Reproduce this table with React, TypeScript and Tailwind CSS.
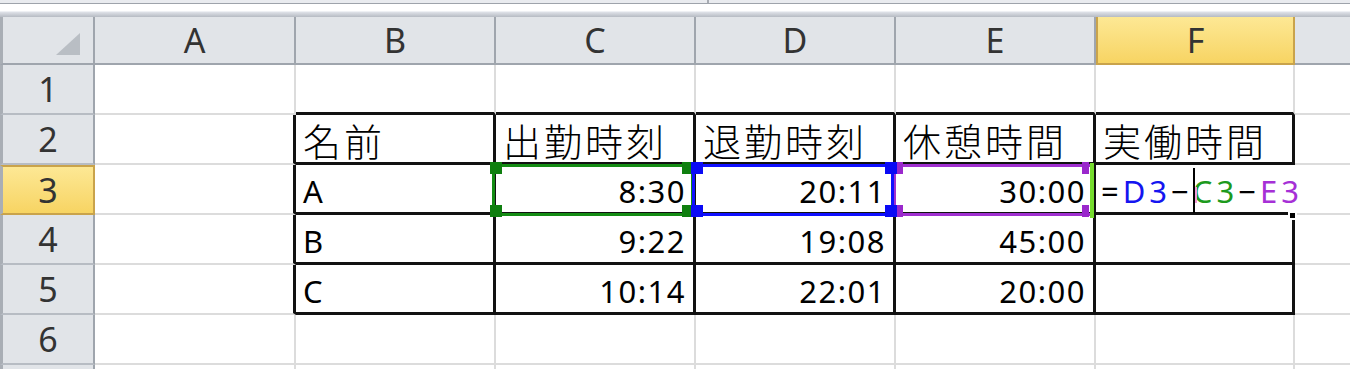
const cols = ["A", "B", "C", "D", "E", "F", ""];

const data: string[][] = [
  ["", "", "", "", "", "", ""],
  ["", "名前", "出勤時刻", "退勤時刻", "休憩時間", "実働時間", ""],
  ["", "A", "8:30", "20:11", "30:00", "", ""],
  ["", "B", "9:22", "19:08", "45:00", "", ""],
  ["", "C", "10:14", "22:01", "20:00", "", ""],
  ["", "", "", "", "", "", ""],
  ["", "", "", "", "", "", ""],
];

const jp = { fontFamily: '"Noto Sans CJK JP", "Noto Sans", sans-serif' };
const sans = { fontFamily: '"Noto Sans", "DejaVu Sans", sans-serif' };

function cellClass(r: number, c: number) {
  // r = 1-based row number, c = 0-based column index
  const inTable = r >= 2 && r <= 5;
  let right = "border-r-[2px] border-r-[#dcdcdc]";
  if (inTable && c <= 5) right = "border-r-[3px] border-r-[#111]";
  if (r === 3 && c === 5) right = "border-r-[3px] border-r-transparent";
  let bottom = "border-b-[2px] border-b-[#dcdcdc]";
  if (r >= 1 && r <= 5 && c >= 1 && c <= 5) bottom = "border-b-[3px] border-b-[#111]";
  return `${right} ${bottom}`;
}

function Handle({ x, y, color }: { x: number; y: number; color: string }) {
  return (
    <div
      className="absolute w-[12px] h-[12px]"
      style={{ left: x, top: y, background: color }}
    />
  );
}

export default function App() {
  return (
    <div className="relative w-[1350px] h-[369px] overflow-hidden bg-white select-none">
      {/* formula bar edge */}
      <div className="h-[17px] flex flex-col">
        <div className="h-[3px] flex bg-[#e9ebef]">
          <div className="w-[707px]" />
          <div className="w-[2px] bg-[#a7abb2]" />
        </div>
        <div className="h-px bg-[#9ea3ab]" />
        <div className="h-[8px] bg-white border-b border-[#eef0f4]" />
        <div className="flex-1 bg-gradient-to-b from-[#dfe2e8] to-[#b6bbc3]" />
      </div>

      <div className="grid grid-cols-[95px_201px_200px_200px_200px_200px_199px_200px] grid-rows-[48px_50px_50px_50px_50px_50px_50px_50px]">
        {/* corner */}
        <div className="relative bg-[#e1e4e8] border-l-[3px] border-l-[#a9aeb5] border-r-[2px] border-r-[#9fa5ad] border-b-[2px] border-b-[#9fa5ad]">
          <svg className="absolute right-[13px] bottom-[8px]" width="24" height="22" viewBox="0 0 24 22">
            <polygon points="24,0 24,22 0,22" fill="#b9bec4" />
          </svg>
        </div>
        {cols.map((l, i) =>
          l === "F" ? (
            <div
              key={i}
              className="flex items-center justify-center bg-gradient-to-b from-[#fde894] to-[#f7d462] border-x-[2px] border-x-[#c9a34b] border-b-[2px] border-b-[#c9a34b] text-[34px] text-[#333] leading-none"
              style={sans}
            >
              {l}
            </div>
          ) : (
            <div
              key={i}
              className="flex items-center justify-center bg-[#e1e4e8] border-r-[2px] border-r-[#9fa5ad] border-b-[2px] border-b-[#9fa5ad] text-[34px] text-[#333] leading-none"
              style={sans}
            >
              {l}
            </div>
          )
        )}

        {data.map((row, i) => {
          const r = i + 1;
          return [
            r === 3 ? (
              <div
                key={`h${r}`}
                className="flex items-center justify-center bg-gradient-to-b from-[#fde894] to-[#f7d462] border-l-[3px] border-l-[#a9aeb5] border-r-[2px] border-r-[#c9a34b] border-y-[2px] border-y-[#c9a34b] text-[34px] text-[#333] leading-none"
                style={sans}
              >
                {r}
              </div>
            ) : (
              <div
                key={`h${r}`}
                className="flex items-center justify-center bg-[#e1e4e8] border-l-[3px] border-l-[#a9aeb5] border-r-[2px] border-r-[#9fa5ad] border-b-[2px] border-b-[#b7bcc3] text-[34px] text-[#333] leading-none"
                style={sans}
              >
                {r <= 6 ? r : ""}
              </div>
            ),
            ...row.map((v, c) => {
              const isNum = r >= 3 && r <= 5 && c >= 2 && c <= 4;
              const isJp = r === 2;
              if (r === 3 && c === 5) {
                return (
                  <div
                    key={`${r}-${c}`}
                    className={`relative z-10 flex items-end pl-[5px] pb-[5px] whitespace-nowrap overflow-visible bg-white text-[31px] leading-none tracking-[4px] ${cellClass(r, c)}`}
                    style={sans}
                  >
                    <span className="text-black">=</span>
                    <span className="text-[#1515f0]">D3</span>
                    <span className="text-black">−</span>
                    {/* text cursor */}
                    <span className="relative w-[5px] h-[31px]">
                      <span className="absolute left-0 bottom-[-6px] w-[2px] h-[45px] bg-black" />
                      <span className="absolute left-[2px] bottom-[4px] w-[2px] h-[16px] bg-[#f39ad8]" />
                    </span>
                    <span className="text-[#1d9a1d]">C3</span>
                    <span className="text-black">−</span>
                    <span className="text-[#a630d6]">E3</span>
                  </div>
                );
              }
              return (
                <div
                  key={`${r}-${c}`}
                  className={`flex items-end leading-none ${
                    isNum
                      ? "justify-end pr-[7px] pb-[5px] text-[31px] tracking-[1.5px]"
                      : isJp
                        ? "pl-[7px] pb-[3px] text-[38px] tracking-[3px] font-light"
                        : "pl-[7px] pb-[5px] text-[31px]"
                  } text-black whitespace-nowrap ${cellClass(r, c)}`}
                  style={isJp ? jp : sans}
                >
                  {v}
                </div>
              );
            }),
          ];
        })}
      </div>

      {/* range reference outlines while editing F3 */}
      <div className="absolute left-[492px] top-[164px] w-[202px] h-[52px] border-[3px] border-[#148c14]" />
      <div className="absolute left-[893px] top-[164px] w-[200px] h-[52px] border-[3px] border-[#a030d0]" />
      <div className="absolute left-[692px] top-[164px] w-[202px] h-[52px] border-[3px] border-[#1010ff]" />
      <Handle x={490} y={162} color="#0f7f0f" />
      <Handle x={490} y={205} color="#0f7f0f" />
      <Handle x={682} y={162} color="#0f7f0f" />
      <Handle x={682} y={205} color="#0f7f0f" />
      <div className="absolute left-[1082px] top-[162px] w-[7px] h-[12px] bg-[#9a28cc]" />
      <div className="absolute left-[1082px] top-[205px] w-[7px] h-[12px] bg-[#9a28cc]" />
      <div className="absolute left-[897px] top-[162px] w-[6px] h-[12px] bg-[#9a28cc]" />
      <div className="absolute left-[897px] top-[205px] w-[6px] h-[12px] bg-[#9a28cc]" />
      <Handle x={691} y={162} color="#0a0af5" />
      <Handle x={691} y={205} color="#0a0af5" />
      <Handle x={885} y={162} color="#0a0af5" />
      <Handle x={885} y={205} color="#0a0af5" />
      <div className="absolute left-[1090px] top-[163px] w-[4px] h-[55px] bg-[#76dc2e]" />
      {/* fill handle */}
      <div className="absolute z-20 left-[1288px] top-[211px] w-[9px] h-[9px] bg-black border-[2px] border-white" />
    </div>
  );
}
